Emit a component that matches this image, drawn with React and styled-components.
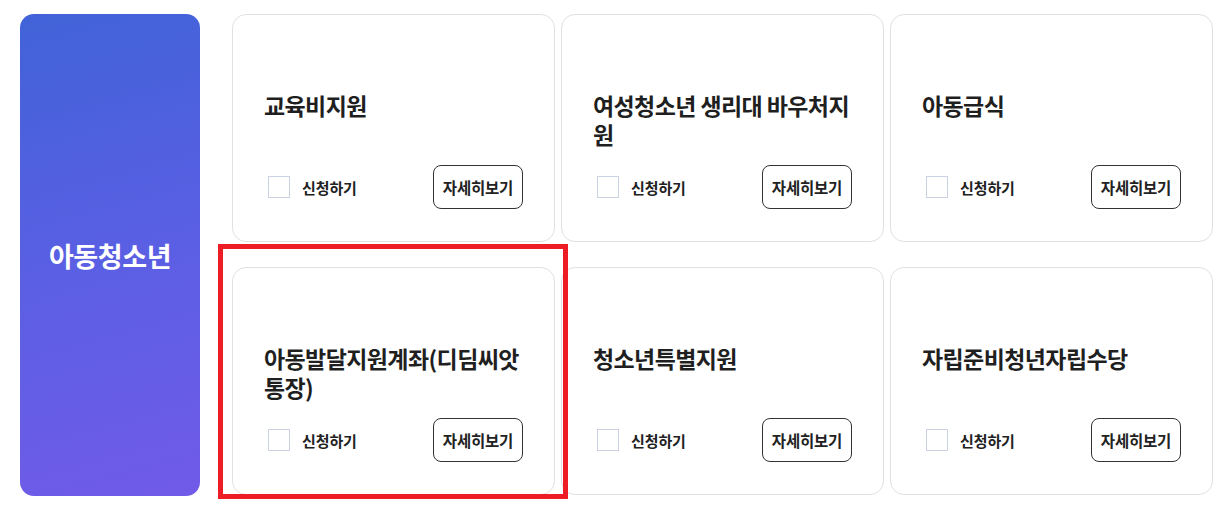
import React from 'react';
import styled, { createGlobalStyle } from 'styled-components';

const GlobalStyle = createGlobalStyle`
  html, body {
    margin: 0;
    padding: 0;
    background: #fff;
  }
  body {
    font-family: "Noto Sans CJK KR", "Noto Sans", sans-serif;
    color: #222;
  }
`;

const Section = styled.section`
  display: flex;
  gap: 32px;
  padding: 14px 18px 10px 20px;
`;

const CategoryPanel = styled.div`
  flex: 0 0 180px;
  height: 482px;
  border-radius: 14px;
  background: linear-gradient(165deg, #4163d8 0%, #5a5fe3 50%, #715be9 100%);
  display: flex;
  align-items: center;
  justify-content: center;
`;

const CategoryName = styled.h2`
  margin: 0;
  color: #fff;
  font-size: 27px;
  font-weight: 700;
  letter-spacing: -0.4px;
`;

const CardGrid = styled.ul`
  list-style: none;
  margin: 0;
  padding: 0;
  display: grid;
  grid-template-columns: repeat(3, 323px);
  grid-auto-rows: 228px;
  column-gap: 6px;
  row-gap: 25px;
`;

const Card = styled.li`
  position: relative;
  box-sizing: border-box;
  display: flex;
  flex-direction: column;
  padding: 76px 20px 32px 31px;
  border: 1px solid #e1e1e1;
  border-radius: 14px;
  background: #fff;
`;

/* red annotation frame drawn over the selected card */
const Highlight = styled.span`
  position: absolute;
  z-index: 2;
  top: -24px;
  left: -15px;
  right: -14px;
  bottom: -5px;
  border: 5px solid #ee1d25;
  pointer-events: none;
`;

const CardTitle = styled.h3`
  margin: 0;
  font-size: 23px;
  line-height: 29px;
  font-weight: 700;
  letter-spacing: -0.6px;
  color: #1f1f1f;
  white-space: pre;
`;

const Actions = styled.div`
  margin-top: auto;
  display: flex;
  align-items: center;
  justify-content: space-between;
  padding-right: 11px;
`;

const ApplyLabel = styled.label`
  display: flex;
  align-items: center;
  gap: 12px;
  font-size: 15px;
  font-weight: 700;
  color: #222;
  letter-spacing: -0.1px;
  cursor: pointer;
`;

const CheckBox = styled.input.attrs({ type: 'checkbox' })`
  appearance: none;
  width: 22px;
  height: 22px;
  margin: 0 0 0 4px;
  border: 1px solid #c9d1e2;
  background: #fff;
  box-sizing: border-box;
`;

const DetailButton = styled.button`
  width: 90px;
  height: 44px;
  padding: 0;
  border: 1px solid #333;
  border-radius: 8px;
  background: #fff;
  font-family: inherit;
  font-size: 15.5px;
  font-weight: 700;
  color: #222;
  letter-spacing: -0.2px;
  cursor: pointer;
`;

const programs = [
  { id: 1, title: '교육비지원' },
  { id: 2, title: '여성청소년 생리대 바우처지\n원' },
  { id: 3, title: '아동급식' },
  { id: 4, title: '아동발달지원계좌(디딤씨앗\n통장)', selected: true },
  { id: 5, title: '청소년특별지원' },
  { id: 6, title: '자립준비청년자립수당' },
];

function ProgramCard({ program }) {
  return (
    <Card>
      {program.selected && <Highlight />}
      <CardTitle>{program.title}</CardTitle>
      <Actions>
        <ApplyLabel>
          <CheckBox />
          신청하기
        </ApplyLabel>
        <DetailButton type="button">자세히보기</DetailButton>
      </Actions>
    </Card>
  );
}

export default function App() {
  return (
    <>
      <GlobalStyle />
      <Section>
        <CategoryPanel>
          <CategoryName>아동청소년</CategoryName>
        </CategoryPanel>
        <CardGrid>
          {programs.map((p) => (
            <ProgramCard key={p.id} program={p} />
          ))}
        </CardGrid>
      </Section>
    </>
  );
}
